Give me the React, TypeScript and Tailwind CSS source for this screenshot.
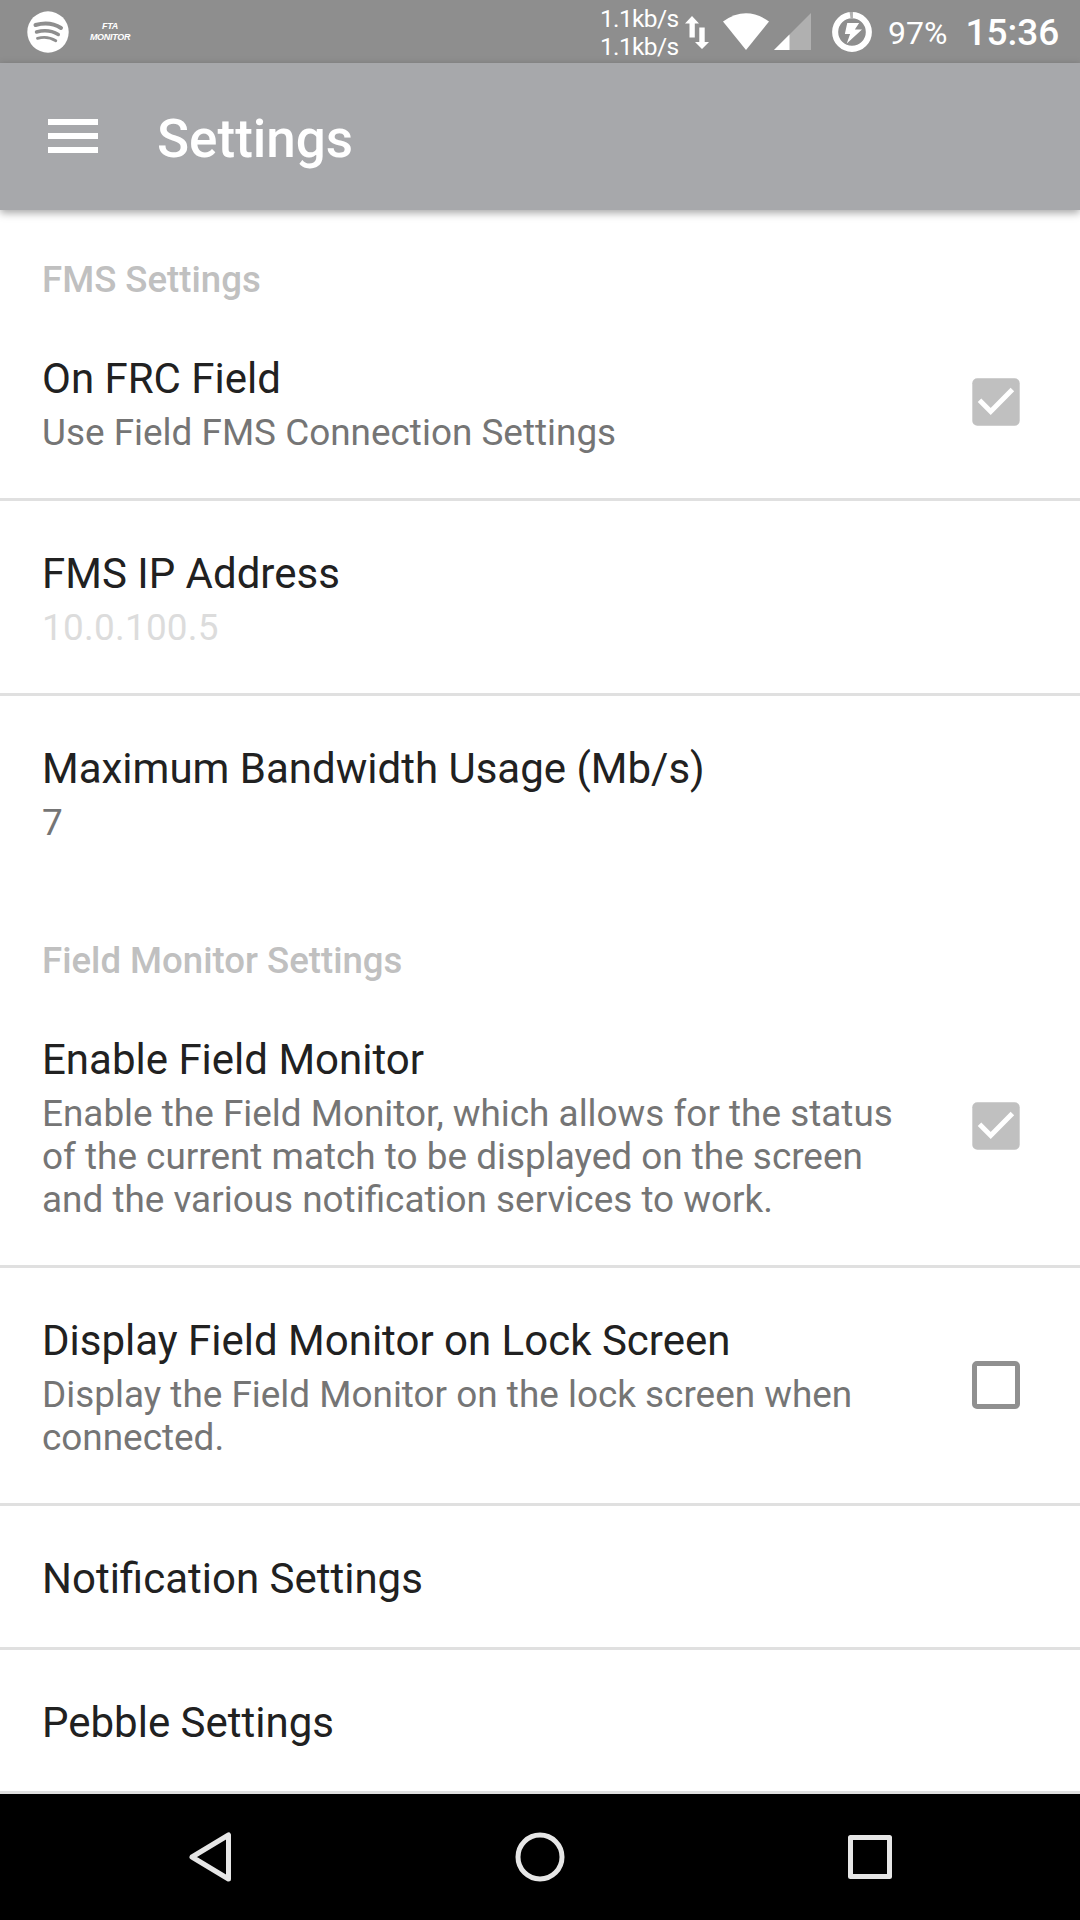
import React from "react";

type PrefProps = {
  title: string;
  summary?: string;
  faded?: boolean;
  check?: "on" | "off";
  divider?: boolean;
};

function Checkbox({ on }: { on: boolean }) {
  return on ? (
    <svg className="mr-[60px] size-12 shrink-0" viewBox="0 0 48 48">
      <rect x="0.3" y="0.3" width="47.4" height="47.4" rx="5" fill="#c0c0c0" />
      <path d="M7.500 22.200 18.700 33.500 40.400 11.400" fill="none" stroke="#fff" strokeWidth="5" />
    </svg>
  ) : (
    <div className="-mt-px mr-[60px] size-12 shrink-0 rounded-[5px] border-[5px] border-[#909090]" />
  );
}

function Preference({ title, summary, faded, check, divider = true }: PrefProps) {
  return (
    <div
      className={
        divider
          ? "flex items-center justify-between border-b-[3px] border-[#e0e0e0] pl-[42px]"
          : "flex items-center justify-between border-b-[3px] border-transparent pl-[42px]"
      }
    >
      <div className={summary ? "w-[870px] pt-12 pb-11" : "w-[870px] pt-12 pb-11"}>
        <div className="text-[42px] leading-[49px] text-[#212121]">{title}</div>
        {summary && (
          <div
            className={
              faded
                ? "mt-2 text-[36.9px] leading-[43px] tracking-[0.25px] text-[#dcdcdc]"
                : "mt-2 text-[36.9px] leading-[43px] text-[#757575]"
            }
          >
            {summary}
          </div>
        )}
      </div>
      {check && <Checkbox on={check === "on"} />}
    </div>
  );
}

function Header({ children }: { children: React.ReactNode }) {
  return (
    <div className="flex h-24 items-end pb-[5px] pl-[42px] text-[36.6px] leading-[43px] font-medium text-[#c0c0c0]">{children}</div>
  );
}

function StatusBar() {
  return (
    <div className="flex h-[63px] items-center bg-[#8e8e8e] text-white">
      <svg className="ml-[27px] size-[42px]" viewBox="0 0 42 42">
        <circle cx="21" cy="21" r="20.700" fill="#fff" />
        <g fill="none" stroke="#8e8e8e" strokeLinecap="round">
          <path d="M8.500 14Q23 10 34 17" strokeWidth="4" />
          <path d="M9.500 21Q21.500 17.600 31.300 23.500" strokeWidth="3.400" />
          <path d="M10.500 27.300Q20.500 24.600 28.800 29.700" strokeWidth="2.800" />
        </g>
      </svg>
      <div className="ml-[20px] w-[42px] text-center font-['Liberation_Sans'] text-[9px] leading-[11px] font-bold tracking-[-0.3px] italic">
        FTA
        <br />
        MONITOR
      </div>
      <div className="ml-[469px] w-[79px] pt-[3px] text-[24.5px] leading-[28px] tracking-[-0.65px] whitespace-nowrap">
        1.1kb/s
        <br />
        1.1kb/s
      </div>
      <svg className="mt-[2px] ml-[6px] h-[34px] w-6" viewBox="0 0 24 34" fill="#fff">
        <path d="M7 0 14 7.500H9.800V21.500H4.500V7.500H0Z" />
        <path d="M17 33 10 26H14.300V11.500H19.700V26H24Z" />
      </svg>
      <svg className="ml-[13px] h-[38px] w-[48px]" viewBox="0 0 48 38">
        <path d="M1 8.500Q24 -8 47 8.500L24 37Z" fill="#fff" />
      </svg>
      <svg className="ml-[4px] size-[37px]" viewBox="0 0 37 37">
        <path d="M0 37 37 0V37Z" fill="#b0b0b0" />
        <path d="M0 37 15.500 21.500V37Z" fill="#fff" />
      </svg>
      <svg className="ml-[21px] size-[40px]" viewBox="0 0 42 42">
        <circle cx="21" cy="21" r="17.700" fill="none" stroke="#fff" strokeWidth="6.400" />
        <path d="M18.500 0h3.500v7h-2.500Z" fill="#b0b0b0" />
        <path d="M16 11.500H28.500L24 18.500H31.500L15.500 33 19 23H13.500Z" fill="#fff" />
      </svg>
      <div className="ml-[16px] pt-[2px] text-[32px] leading-[38px]">97%</div>
      <div className="ml-[18px] pt-[2px] text-[37px] leading-[44px] font-medium">15:36</div>
    </div>
  );
}

export default function App() {
  return (
    <div className="flex h-[1920px] w-[1080px] flex-col overflow-hidden bg-white font-[Roboto,sans-serif]">
      <StatusBar />
      <div className="relative flex h-[147px] items-center bg-[#a7a8ab] pl-12 text-white shadow-[0_3px_8px_rgba(0,0,0,0.35)]">
        <div className="flex w-[50px] flex-col gap-[8px] pb-[2px]">
          <div className="h-[6px] bg-white" />
          <div className="h-[6px] bg-white" />
          <div className="h-[6px] bg-white" />
        </div>
        <div className="ml-[59px] pt-[5px] text-[53px] leading-[60px] font-medium">Settings</div>
      </div>
      <div className="flex-1">
        <Header>FMS Settings</Header>
        <Preference title="On FRC Field" summary="Use Field FMS Connection Settings" check="on" />
        <Preference title="FMS IP Address" summary="10.0.100.5" faded />
        <Preference title="Maximum Bandwidth Usage (Mb/s)" summary="7" divider={false} />
        <Header>Field Monitor Settings</Header>
        <Preference
          title="Enable Field Monitor"
          summary="Enable the Field Monitor, which allows for the status of the current match to be displayed on the screen and the various notification services to work."
          check="on"
        />
        <Preference
          title="Display Field Monitor on Lock Screen"
          summary="Display the Field Monitor on the lock screen when connected."
          check="off"
        />
        <Preference title="Notification Settings" />
        <Preference title="Pebble Settings" />
      </div>
      <div className="h-[126px] bg-black">
        <svg className="h-[126px] w-[1080px]" viewBox="0 0 1080 126" fill="none" stroke="#e6e6e6" strokeWidth="5" strokeLinejoin="round">
          <path d="M228.500 41V85L192 63Z" />
          <circle cx="540" cy="63" r="22" />
          <rect x="850.500" y="43.500" width="39" height="39" />
        </svg>
      </div>
    </div>
  );
}
